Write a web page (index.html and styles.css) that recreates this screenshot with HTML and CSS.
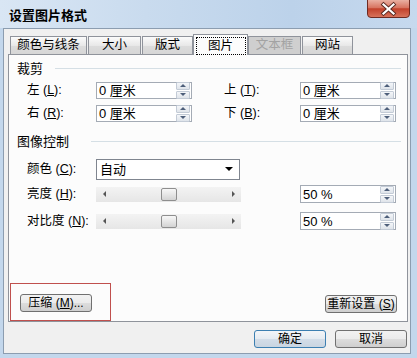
FILE: index.html
```html
<!DOCTYPE html>
<html lang="zh-CN">
<head>
  <meta charset="UTF-8" />
  <title>设置图片格式</title>
  <link rel="stylesheet" href="styles.css">
</head>
<body>
  <div class="window">
    <div class="titlebar">
      <span class="title">设置图片格式</span>
      <button class="close" aria-label="关闭">
        <svg width="43" height="18" viewBox="0 0 43 18">
          <defs>
            <linearGradient id="red" x1="0" y1="0" x2="0" y2="1">
              <stop offset="0" stop-color="#eab0a2"/>
              <stop offset="0.45" stop-color="#d7735f"/>
              <stop offset="0.5" stop-color="#c2412b"/>
              <stop offset="1" stop-color="#d9755d"/>
            </linearGradient>
          </defs>
          <path d="M0.5 0 V14 Q0.5 17.5 4 17.5 H39 Q42.5 17.5 42.5 14 V0" fill="url(#red)" stroke="#6e2b22"/>
          <path d="M16.5 4.5 L26.5 13.5 M26.5 4.5 L16.5 13.5" stroke="#5a2a22" stroke-width="4" stroke-linecap="square"/>
          <path d="M16.5 4.5 L26.5 13.5 M26.5 4.5 L16.5 13.5" stroke="#fff" stroke-width="2.2" stroke-linecap="square"/>
        </svg>
      </button>
    </div>

    <div class="client">
      <div class="tabs">
        <div class="tab">颜色与线条</div>
        <div class="tab">大小</div>
        <div class="tab">版式</div>
        <div class="tab active"><span class="focus">图片</span></div>
        <div class="tab disabled">文本框</div>
        <div class="tab">网站</div>
      </div>

      <div class="panel">
        <div class="section"><span>裁剪</span><i class="rule"></i></div>

        <div class="row row-first">
          <label class="lbl">左 (<u>L</u>):</label>
          <div class="spin"><span class="val">0 厘米</span><span class="arrows"><b class="up"></b><b class="down"></b></span></div>
          <label class="lbl lbl-right">上 (<u>T</u>):</label>
          <div class="spin"><span class="val">0 厘米</span><span class="arrows"><b class="up"></b><b class="down"></b></span></div>
        </div>

        <div class="row row-second">
          <label class="lbl">右 (<u>R</u>):</label>
          <div class="spin"><span class="val">0 厘米</span><span class="arrows"><b class="up"></b><b class="down"></b></span></div>
          <label class="lbl lbl-right">下 (<u>B</u>):</label>
          <div class="spin"><span class="val">0 厘米</span><span class="arrows"><b class="up"></b><b class="down"></b></span></div>
        </div>

        <div class="section section-image"><span>图像控制</span><i class="rule"></i></div>

        <div class="row row-color">
          <label class="lbl">颜色 (<u>C</u>):</label>
          <div class="combo"><span class="val">自动</span><b class="drop"></b></div>
        </div>

        <div class="row row-bright">
          <label class="lbl">亮度 (<u>H</u>):</label>
          <div class="slider"><b class="tri-left"></b><span class="thumb"></span><b class="tri-right"></b></div>
          <div class="spin spin-pct"><span class="val">50 %</span><span class="arrows"><b class="up"></b><b class="down"></b></span></div>
        </div>

        <div class="row row-contrast">
          <label class="lbl">对比度 (<u>N</u>):</label>
          <div class="slider"><b class="tri-left"></b><span class="thumb"></span><b class="tri-right"></b></div>
          <div class="spin spin-pct"><span class="val">50 %</span><span class="arrows"><b class="up"></b><b class="down"></b></span></div>
        </div>

        <div class="panel-bottom">
          <div class="mark">
            <button class="btn">压缩 (<u>M</u>)...</button>
          </div>
          <button class="btn btn-reset">重新设置 (<u>S</u>)</button>
        </div>
      </div>

      <div class="footer">
        <button class="btn btn-default">确定</button>
        <button class="btn">取消</button>
      </div>
    </div>
  </div>
</body>
</html>
```

FILE: styles.css
```css
body {
  margin: 0;
  width: 417px;
  height: 358px;
  overflow: hidden;
  background: #c3d7ec;
  font-family: "Liberation Sans", "Noto Sans CJK SC", sans-serif;
  font-size: 13px;
  line-height: 15px;
  color: #000;
}
u {
  text-decoration: underline;
}
.window {
  display: flex;
  flex-direction: column;
  height: 358px;
}

/* title bar */
.titlebar {
  position: relative;
  height: 28px;
  flex-shrink: 0;
  display: flex;
  align-items: center;
  padding-left: 9px;
  background: linear-gradient(to right, #d9e6f4 0%, #c9dbee 35%, #bcd2ea 70%, #c6d9ee 100%);
}
.title {
  font-weight: bold;
  font-size: 13px;
  margin-top: 2px;
}
.close {
  position: absolute;
  top: 0;
  left: 367px;
  width: 43px;
  height: 18px;
  padding: 0;
  border: none;
  background: none;
}
.close svg {
  display: block;
}

/* client area */
.client {
  flex: 1;
  margin: 0 6px 4px 3px;
  border: 1px solid #8c9db0;
  background: #f0f0f0;
  display: flex;
  flex-direction: column;
}

/* tabs */
.tabs {
  height: 25px;
  flex-shrink: 0;
  display: flex;
  align-items: flex-end;
  padding-left: 6px;
}
.tab {
  height: 18px;
  border: 1px solid #8f939b;
  border-bottom: none;
  box-sizing: border-box;
  display: flex;
  align-items: center;
  justify-content: center;
  background: linear-gradient(#fbfbfb, #e8e8e8 50%, #dcdcdc 51%, #d6d6d6);
  margin-right: 1px;
  font-size: 12.5px;
}
.tab:nth-child(1) { width: 77px; }
.tab:nth-child(2) { width: 53px; }
.tab:nth-child(3) { width: 51px; }
.tab:nth-child(5) { width: 53px; }
.tab:nth-child(6) { width: 51px; }
.tab.active {
  width: 55px;
  height: 21px;
  margin: 0 0 -1px -1px;
  position: relative;
  z-index: 1;
  background: #fcfcfc;
  align-items: flex-start;
}
.focus {
  display: flex;
  align-items: center;
  justify-content: center;
  width: 48px;
  height: 16px;
  margin-top: 2px;
  border: 1px dotted #000;
}
.tab.disabled {
  background: #cfcfcf;
  color: #a3a3a3;
}

/* panel */
.panel {
  width: 400px;
  height: 268px;
  box-sizing: border-box;
  margin-left: 4px;
  border: 1px solid #8f939b;
  background: #fcfcfc;
  display: flex;
  flex-direction: column;
}
.section {
  height: 14px;
  margin-top: 6px;
  padding-left: 8px;
  display: flex;
  align-items: center;
}
.rule {
  flex: 1;
  height: 1px;
  background: #d5dfe5;
  margin: 0 6px 0 12px;
}
.section-image {
  margin-top: 11px;
}
.section-image .rule {
  margin-left: 22px;
}

.row {
  height: 20px;
  display: flex;
  align-items: center;
  padding-left: 18px;
}
.row-first { margin-top: 5px; }
.row-second { margin-top: 3px; }
.row-color { margin-top: 10px; height: 22px; }
.row-bright { margin-top: 4px; }
.row-contrast { margin-top: 7px; }

.lbl {
  width: 69px;
  flex-shrink: 0;
  white-space: nowrap;
  font-size: 12.5px;
}
.lbl-right {
  width: 76px;
  margin-left: 32px;
}

/* spin boxes */
.spin {
  width: 96px;
  height: 17px;
  box-sizing: border-box;
  border: 1px solid #a4abb5;
  background: #fff;
  display: flex;
  align-items: center;
  padding-left: 2px;
}
.spin-pct {
  height: 18px;
  margin-left: 59px;
}
.val {
  flex: 1;
}
.arrows {
  width: 14px;
  display: flex;
  flex-direction: column;
  gap: 1px;
  margin-right: 1px;
}
.arrows b {
  height: 6px;
  border: 1px solid #c3cbd6;
  border-radius: 1px;
  background: linear-gradient(#f4f6f9, #dfe4ea);
  display: flex;
  align-items: center;
  justify-content: center;
}
.arrows b::after {
  content: "";
  border-left: 3px solid transparent;
  border-right: 3px solid transparent;
}
.arrows .up::after {
  border-bottom: 3px solid #4e5f7a;
}
.arrows .down::after {
  border-top: 3px solid #4e5f7a;
}

/* combo box */
.combo {
  width: 144px;
  height: 21px;
  box-sizing: border-box;
  border: 1px solid #7f858f;
  background: #fff;
  display: flex;
  align-items: center;
  padding: 0 6px 0 3px;
}
.drop {
  border-left: 4px solid transparent;
  border-right: 4px solid transparent;
  border-top: 4px solid #000;
}

/* sliders */
.slider {
  width: 145px;
  height: 15px;
  box-sizing: border-box;
  background: linear-gradient(#f3f3f3, #e6e6e6);
  display: flex;
  align-items: center;
  justify-content: space-between;
  padding: 0 6px 0 7px;
}
.tri-left {
  border-top: 3px solid transparent;
  border-bottom: 3px solid transparent;
  border-right: 3px solid #555;
}
.tri-right {
  border-top: 3px solid transparent;
  border-bottom: 3px solid transparent;
  border-left: 3px solid #555;
}
.thumb {
  width: 16px;
  height: 13px;
  box-sizing: border-box;
  border: 1px solid #8e8e8e;
  border-radius: 2px;
  background: linear-gradient(#f7f7f7, #e6e6e6 50%, #d3d3d3);
}

/* buttons */
.btn {
  width: 72px;
  height: 18px;
  padding: 0;
  box-sizing: border-box;
  border: 1px solid #707070;
  border-radius: 3px;
  background: linear-gradient(#f2f2f2, #ebebeb 50%, #dddddd 51%, #cfcfcf);
  font-family: inherit;
  font-size: 12px;
  line-height: 15px;
  white-space: nowrap;
  color: #000;
}
.btn-default {
  border-color: #3c7fb1;
  background: linear-gradient(#f3f5f8, #e5ebf1 50%, #d3dde8 51%, #c9d5e1);
}

.panel-bottom {
  margin-top: auto;
  display: flex;
  justify-content: space-between;
  align-items: flex-end;
  padding: 0 10px 0 1px;
}
.mark {
  border: 1px solid #c0504d;
  padding: 10px 18px 8px 9px;
}
.btn-reset {
  margin-bottom: 8px;
}

.footer {
  display: flex;
  justify-content: flex-end;
  gap: 9px;
  padding: 8px 3px 0 0;
}
```
